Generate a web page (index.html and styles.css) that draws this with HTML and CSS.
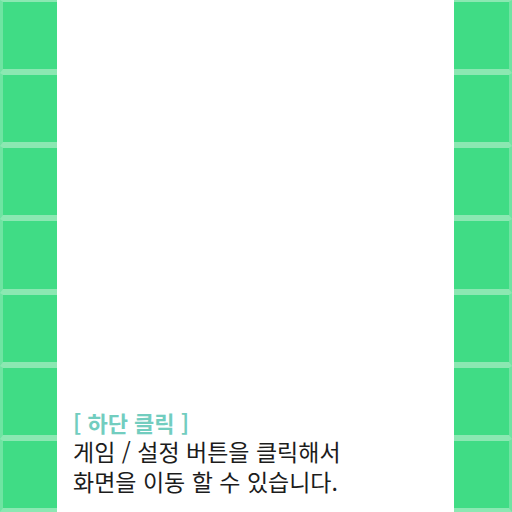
FILE: index.html
```html
<!DOCTYPE html>
<html lang="ko">
<head>
<meta charset="utf-8">
<link rel="stylesheet" href="styles.css">
</head>
<body>
<div class="screen">
  <div class="strip strip-left">
    <div class="tile"></div><div class="tile"></div><div class="tile"></div><div class="tile"></div><div class="tile"></div><div class="tile"></div><div class="tile"></div>
  </div>
  <main class="center">
    <div class="guide">
      <p class="guide-title">[ 하단 클릭 ]</p>
      <p class="guide-text">게임 / 설정 버튼을 클릭해서<br>화면을 이동 할 수 있습니다.</p>
    </div>
  </main>
  <div class="strip strip-right">
    <div class="tile"></div><div class="tile"></div><div class="tile"></div><div class="tile"></div><div class="tile"></div><div class="tile"></div><div class="tile"></div>
  </div>
</div>
</body>
</html>
```

FILE: styles.css
```css
html, body {
  margin: 0;
  padding: 0;
  background: #ffffff;
}
.screen {
  display: flex;
  width: 512px;
  height: 512px;
  overflow: hidden;
}
.strip {
  display: flex;
  flex-direction: column;
  flex: none;
}
.strip-left { width: 57px; }
.strip-right { width: 58px; }
.tile {
  flex: 1;
  background: #40dc85;
  border-top: 2px solid #8be8b2;
  border-bottom: 4px solid #8be8b2;
}
.strip-left .tile { border-left: 3px solid #6fe4a2; }
.strip-right .tile { border-right: 3px solid #6fe4a2; }
.center {
  flex: 1;
  display: flex;
  flex-direction: column;
  justify-content: flex-end;
  padding: 0 0 16px 16px;
  font-family: "Noto Sans CJK KR", "Noto Sans", sans-serif;
}
.guide p { margin: 0; }
.guide-title {
  color: #72cdbf;
  font-weight: 700;
  font-size: 22px;
  line-height: 28px;
}
.guide-text {
  color: #1c1c1c;
  font-size: 23px;
  line-height: 30px;
}
```
